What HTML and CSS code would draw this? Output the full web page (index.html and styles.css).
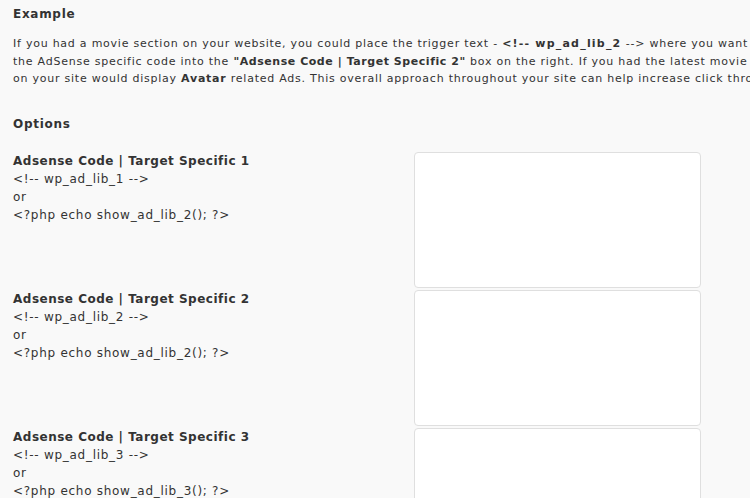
FILE: index.html
```html
<!DOCTYPE html>
<html>
<head>
<meta charset="utf-8">
<link rel="stylesheet" href="styles.css">
</head>
<body>
<div class="page">
  <h3 class="heading">Example</h3>
  <p class="intro">If you had a movie section on your website, you could place the trigger text - <b class="trigger">&lt;!-- wp_ad_lib_2</b> --&gt; where you want<br>the AdSense specific code into the <b class="boxname">"Adsense Code | Target Specific 2"</b> box on the right. If you had the latest movie<br>on your site would display <b>Avatar</b> related Ads. This overall approach throughout your site can help increase click thro</p>
  <h3 class="heading heading-options">Options</h3>
  <div class="options">
    <div class="label-cell">
      <div class="label">Adsense Code | Target Specific 1</div>
      <div>&lt;!-- wp_ad_lib_1 --&gt;</div>
      <div>or</div>
      <div>&lt;?php echo show_ad_lib_2(); ?&gt;</div>
    </div>
    <textarea class="code-box"></textarea>
    <div class="label-cell">
      <div class="label">Adsense Code | Target Specific 2</div>
      <div>&lt;!-- wp_ad_lib_2 --&gt;</div>
      <div>or</div>
      <div>&lt;?php echo show_ad_lib_2(); ?&gt;</div>
    </div>
    <textarea class="code-box"></textarea>
    <div class="label-cell">
      <div class="label">Adsense Code | Target Specific 3</div>
      <div>&lt;!-- wp_ad_lib_3 --&gt;</div>
      <div>or</div>
      <div>&lt;?php echo show_ad_lib_3(); ?&gt;</div>
    </div>
    <textarea class="code-box"></textarea>
  </div>
</div>
</body>
</html>
```

FILE: styles.css
```css
html, body {
  margin: 0;
  padding: 0;
  background: #f9f9f9;
  overflow: hidden;
}
.page {
  padding: 5px 0 0 13px;
  font-family: "DejaVu Sans", Verdana, sans-serif;
  color: #333;
  font-size: 11px;
}
.heading {
  margin: 0;
  font-size: 12px;
  font-weight: bold;
  line-height: 18px;
  letter-spacing: 0.7px;
}
.intro {
  margin: 12px 0 0 0;
  line-height: 17.5px;
  white-space: nowrap;
  letter-spacing: 0.76px;
}
.intro b {
  font-weight: bold;
}
.intro .trigger {
  letter-spacing: 1.2px;
}
.intro .boxname {
  letter-spacing: 0.55px;
}
.heading-options {
  margin-top: 27px;
}
.options {
  margin-top: 19px;
  display: grid;
  grid-template-columns: 401px 287px;
  row-gap: 2px;
}
.label-cell {
  font-size: 12px;
  line-height: 18px;
  letter-spacing: 0.72px;
  padding-top: 0;
}
.label {
  font-weight: bold;
  letter-spacing: 0.5px;
}
.code-box {
  margin: 0;
  box-sizing: border-box;
  width: 287px;
  height: 136px;
  border: 1px solid #dfdfdf;
  border-radius: 4px;
  background: #fff;
  resize: none;
  padding: 2px;
}
```
